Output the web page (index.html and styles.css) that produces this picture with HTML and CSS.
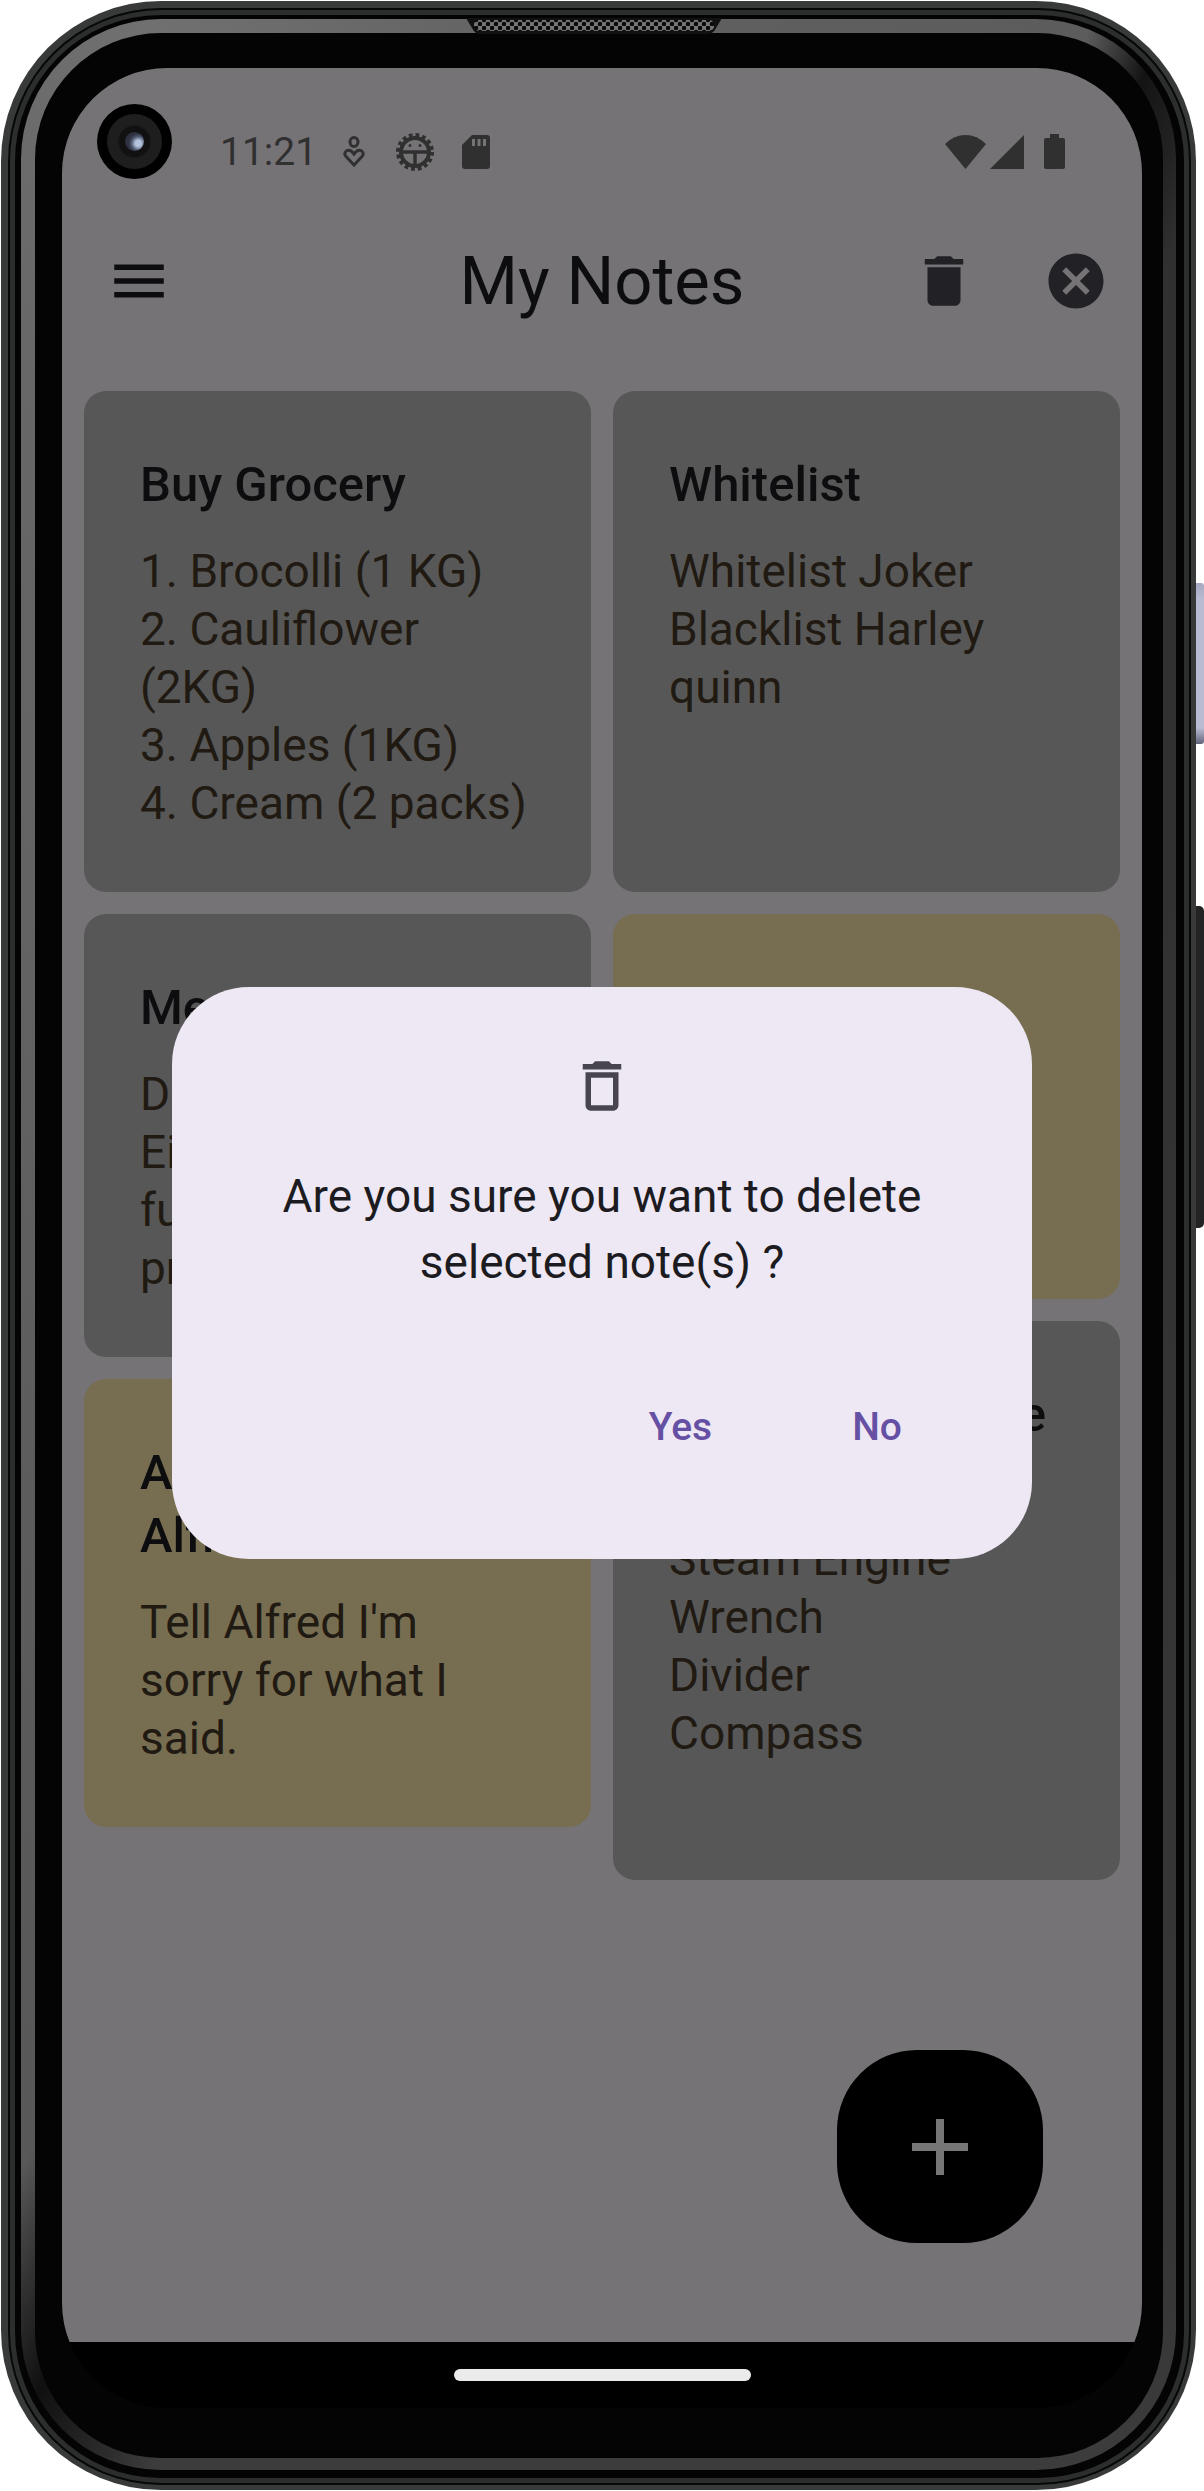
FILE: index.html
```html
<!DOCTYPE html>
<html lang="en">
<head>
<meta charset="utf-8">
<meta name="viewport" content="width=device-width, initial-scale=1">
<title>My Notes</title>
<link rel="stylesheet" href="styles.css">
</head>
<body>
<div class="phone">
  <span class="side-key side-key-power"></span>
  <span class="side-key side-key-volume"></span>
  <div class="shell shell-groove"><div class="shell shell-rail"><div class="shell shell-seam"><div class="shell shell-rim"><div class="shell shell-bezel">
    <svg class="speaker" width="256" height="16" viewBox="0 0 256 16" aria-hidden="true">
      <defs>
        <pattern id="mesh" width="8" height="8" patternUnits="userSpaceOnUse">
          <rect width="8" height="8" fill="#777"/>
          <circle cx="2" cy="2" r="2.3" fill="#0a0a0a"/>
          <circle cx="6" cy="6" r="2.3" fill="#0a0a0a"/>
        </pattern>
      </defs>
      <path d="M0 0H256L250 10Q247 16 242 16H14Q9 16 6 10Z" fill="#111"/>
      <rect x="8" y="2" width="240" height="11" rx="5" fill="url(#mesh)"/>
    </svg>
    <div class="screen">
      <span class="camera"><span class="camera-ring"><span class="camera-lens"></span></span></span>
      <div class="app">
        <div class="status-bar">
          <span class="clock">11:21</span>
          <svg class="st-heart" width="22" height="32" viewBox="0 0 22 32" fill="none" stroke="#303030" stroke-width="3"><ellipse cx="11" cy="6" rx="4" ry="4.500"/><path d="M11 29L3 20.500Q.5 17.500 3.300 15Q7 12.500 11 18Q15 12.500 18.700 15Q21.500 17.500 19 20.500Z"/></svg>
          <svg class="st-gear" width="40" height="40" viewBox="0 0 40 40" fill="none" stroke="#303030"><circle cx="20" cy="20" r="16.500" stroke-width="5" stroke-dasharray="3.600 2.880"/><circle cx="20" cy="20" r="14" stroke-width="4"/><path d="M6 20H34M20 20V34" stroke-width="3.500"/><g fill="#303030" stroke="none"><circle cx="15" cy="13.500" r="1.500"/><circle cx="25" cy="13.500" r="1.500"/></g></svg>
          <svg class="st-sd" width="28" height="34" viewBox="0 0 28 34"><path d="M10 0H25Q28 0 28 3V31Q28 34 25 34H3Q0 34 0 31V10Z" fill="#303030"/><path d="M10 4h3v7h-3zM15.500 4h3v7h-3zM21 4h3v7h-3z" fill="#767377"/></svg>
          <svg class="st-wifi" width="41" height="34" viewBox="0 0 41 34"><path d="M20.500 34L0 9Q9 0 20.500 0T41 9Z" fill="#303030"/></svg>
          <svg class="st-signal" width="34" height="34" viewBox="0 0 34 34"><path d="M34 0V34H0Z" fill="#303030"/></svg>
          <svg class="st-battery" width="21" height="35" viewBox="0 0 21 35"><path d="M6 0h9v4h4q2 0 2 2v27q0 2-2 2H2q-2 0-2-2V6q0-2 2-2h4z" fill="#303030"/></svg>
        </div>
        <header class="app-bar">
          <button class="icon-button" aria-label="Menu"><svg width="66" height="66" viewBox="0 0 24 24" fill="#0d0d0f"><path d="M3 18h18v-2H3zm0-5h18v-2H3zm0-7v2h18V6z"/></svg></button>
          <h1 class="app-title">My Notes</h1>
          <button class="icon-button" aria-label="Delete"><svg width="66" height="66" viewBox="0 0 24 24" fill="#222126"><path d="M6 19c0 1.100.9 2 2 2h8c1.100 0 2-.9 2-2V7H6zM19 4h-3.500l-1-1h-5l-1 1H5v2h14z"/></svg></button>
          <button class="icon-button" aria-label="Clear selection"><svg width="66" height="66" viewBox="0 0 24 24" fill="#222126"><path d="M12 2C6.470 2 2 6.470 2 12s4.470 10 10 10 10-4.470 10-10S17.530 2 12 2zm5 13.590L15.590 17 12 13.410 8.410 17 7 15.590 10.590 12 7 8.410 8.410 7 12 10.590 15.590 7 17 8.410 13.410 12z"/></svg></button>
        </header>
        <main class="notes">
          <div class="notes-column">
            <article class="note"><h2 class="note-title">Buy Grocery</h2><p class="note-body">1. Brocolli (1 KG)
2. Cauliflower
(2KG)
3. Apples (1KG)
4. Cream (2 packs)</p></article>
            <article class="note"><h2 class="note-title">Meeting</h2><p class="note-body">Do
Eight
future
projects</p></article>
            <article class="note note-selected"><h2 class="note-title">Apologize to Alfred</h2><p class="note-body">Tell Alfred I'm
sorry for what I
said.</p></article>
          </div>
          <div class="notes-column">
            <article class="note"><h2 class="note-title">Whitelist</h2><p class="note-body lines-five">Whitelist Joker
Blacklist Harley
quinn</p></article>
            <article class="note note-selected"><h2 class="note-title">Gems</h2><p class="note-body lines-three"></p></article>
            <article class="note"><h2 class="note-title">Tools to organize</h2><p class="note-body lines-six">Gears
Steam Engine
Wrench
Divider
Compass</p></article>
          </div>
        </main>
        <button class="fab" aria-label="Add note"><svg width="56" height="56" viewBox="0 0 56 56" fill="#767676"><path d="M24 0h8v24h24v8H32v24h-8V32H0v-8h24z"/></svg></button>
      </div>
      <div class="nav-bar"><span class="nav-pill"></span></div>
      <div class="scrim">
        <div class="dialog" role="alertdialog" aria-modal="true" aria-labelledby="dialog-text">
          <svg class="dialog-icon" width="66" height="66" viewBox="0 0 24 24" fill="#49454f"><path d="M6 19c0 1.100.9 2 2 2h8c1.100 0 2-.9 2-2V7H6zM8 9h8v10H8zM15.500 4l-1-1h-5l-1 1H5v2h14V4z"/></svg>
          <p class="dialog-text" id="dialog-text">Are you sure you want to delete selected note(s) ?</p>
          <div class="dialog-actions">
            <button class="text-button">Yes</button>
            <button class="text-button">No</button>
          </div>
        </div>
      </div>
    </div>
  </div></div></div></div></div>
</div>
</body>
</html>
```
FILE: styles.css
```css
* { box-sizing: border-box; }

body {
  display: flex;
  min-height: 100vh;
  margin: 0;
  padding: 1px 8px 1px 1px;
  background: #fff;
  font-family: Roboto, sans-serif;
}

h1, h2, p { margin: 0; font-weight: 400; }

button {
  padding: 0;
  border: 0;
  background: none;
  font: inherit;
  cursor: pointer;
}

svg { display: block; flex: none; }

/* Phone body: nested shells, each one a rim of the case */
.phone {
  position: relative;
  display: flex;
  flex: 1;
  padding: 7px 5px 5px 7px;
  border-radius: 160px;
  background: #383a39;
}

.shell { position: relative; display: flex; flex: 1; min-width: 0; }
.shell-groove { padding: 2px; border-radius: 153px; background: #070707; }
.shell-rail { padding: 5px; border-radius: 151px; background: #2c2d2d; }
.shell-seam { padding: 4px 8px 8px 6px; border-radius: 146px; background: #040404; }
.shell-rim {
  padding: 14px 13px 12px 14px;
  border-radius: 140px;
  background: conic-gradient(#606060 0deg, #5c5c5c 22deg, #141414 25deg, #303030 30deg, #363636 150deg, #3c3c3c 157deg, #3c3c3c 200deg, #101010 206deg, #585858 212deg, #666 325deg, #707070 340deg, #606060 360deg);
}
.shell-bezel { padding: 35px 21px 50px 27px; border-radius: 126px; background: #040404; }

.side-key { position: absolute; left: 100%; width: 8px; }
.side-key-power {
  top: 582px;
  height: 161px;
  border-radius: 0 3px 3px 0;
  background: linear-gradient(to bottom, #a5a8c0, #b9bbd2 10%, #b9bbd2 90%, #62647c);
}
.side-key-volume {
  top: 905px;
  height: 322px;
  border-radius: 0 5px 5px 0;
  background: #232325;
}

.speaker { position: absolute; top: -15px; left: 50%; margin-left: -133px; }

/* Screen */
.screen {
  position: relative;
  display: flex;
  flex: 1;
  flex-direction: column;
  min-width: 0;
  overflow: hidden;
  border-radius: 105px;
  background: #000;
}

.camera {
  position: absolute;
  z-index: 1;
  top: 36px;
  left: 35px;
  display: grid;
  width: 75px;
  height: 75px;
  place-items: center;
  border-radius: 50%;
  background: #000;
}
.camera-ring {
  display: grid;
  width: 55px;
  height: 55px;
  place-items: center;
  border-radius: 50%;
  background: radial-gradient(circle, #111 0 15px, #1e1e1e 17px);
}
.camera-lens {
  width: 19px;
  height: 19px;
  border-radius: 50%;
  background: radial-gradient(circle at 70% 60%, #b4c4dc 0 3px, #4c566c 7px, #2c3040 10px);
}

.app {
  position: relative;
  display: flex;
  flex: 1;
  flex-direction: column;
  background: #767377;
}

.status-bar {
  display: flex;
  align-items: center;
  height: 125px;
  padding: 42px 77px 0 158px;
}
.clock { color: #303030; font-size: 39px; }
.st-heart { margin-left: 26px; }
.st-gear { margin-left: 30px; }
.st-sd { margin-left: 27px; }
.st-wifi { margin-left: auto; }
.st-signal { margin-left: 4px; }
.st-battery { margin-left: 20px; }

.app-bar {
  display: grid;
  grid-template-columns: 264px 1fr 132px 132px;
  align-items: center;
  height: 176px;
}
.icon-button { display: grid; width: 132px; height: 132px; place-items: center; }
.app-bar .icon-button:first-child { margin-left: 11px; }
.app-title { color: #0d0d0f; font-size: 67px; line-height: 88px; text-align: center; }

.notes {
  display: grid;
  grid-template-columns: 1fr 1fr;
  align-items: start;
  gap: 22px;
  padding: 22px;
}
.notes-column { display: flex; flex-direction: column; gap: 22px; min-width: 0; }
.note {
  display: flex;
  flex-direction: column;
  gap: 26px;
  padding: 62px 56px 60px;
  border-radius: 22px;
  background: #575757;
}
.note-selected { background: #776d51; }
.note-title { color: #0d0d0f; font-size: 49px; font-weight: 500; line-height: 63px; }
.note-body { color: #201a12; font-size: 46px; line-height: 58px; white-space: pre-line; }
.lines-three { min-height: 174px; }
.lines-five { min-height: 290px; }
.lines-six { min-height: 348px; }

.fab {
  position: absolute;
  right: 99px;
  bottom: 99px;
  display: grid;
  width: 206px;
  height: 193px;
  place-items: center;
  border-radius: 80px;
  background: #000;
}

.nav-bar { display: grid; height: 66px; place-items: center; }
.nav-pill { width: 297px; height: 12px; border-radius: 6px; background: #ebebeb; }

/* Dialog */
.scrim {
  position: absolute;
  inset: 0;
  display: grid;
  padding: 70px 110px 0;
  align-items: center;
}
.dialog {
  display: flex;
  flex-direction: column;
  padding: 66px;
  border-radius: 77px;
  background: #eee8f4;
}
.dialog-icon { align-self: center; margin-bottom: 44px; }
.dialog-text {
  margin-bottom: 66px;
  color: #1c1b1f;
  font-size: 46px;
  line-height: 66px;
  text-align: center;
}
.dialog-actions { display: flex; justify-content: flex-end; gap: 12px; }
.text-button {
  height: 132px;
  padding: 0 64px;
  color: #6650a4;
  font-size: 39px;
  font-weight: 500;
}
```
